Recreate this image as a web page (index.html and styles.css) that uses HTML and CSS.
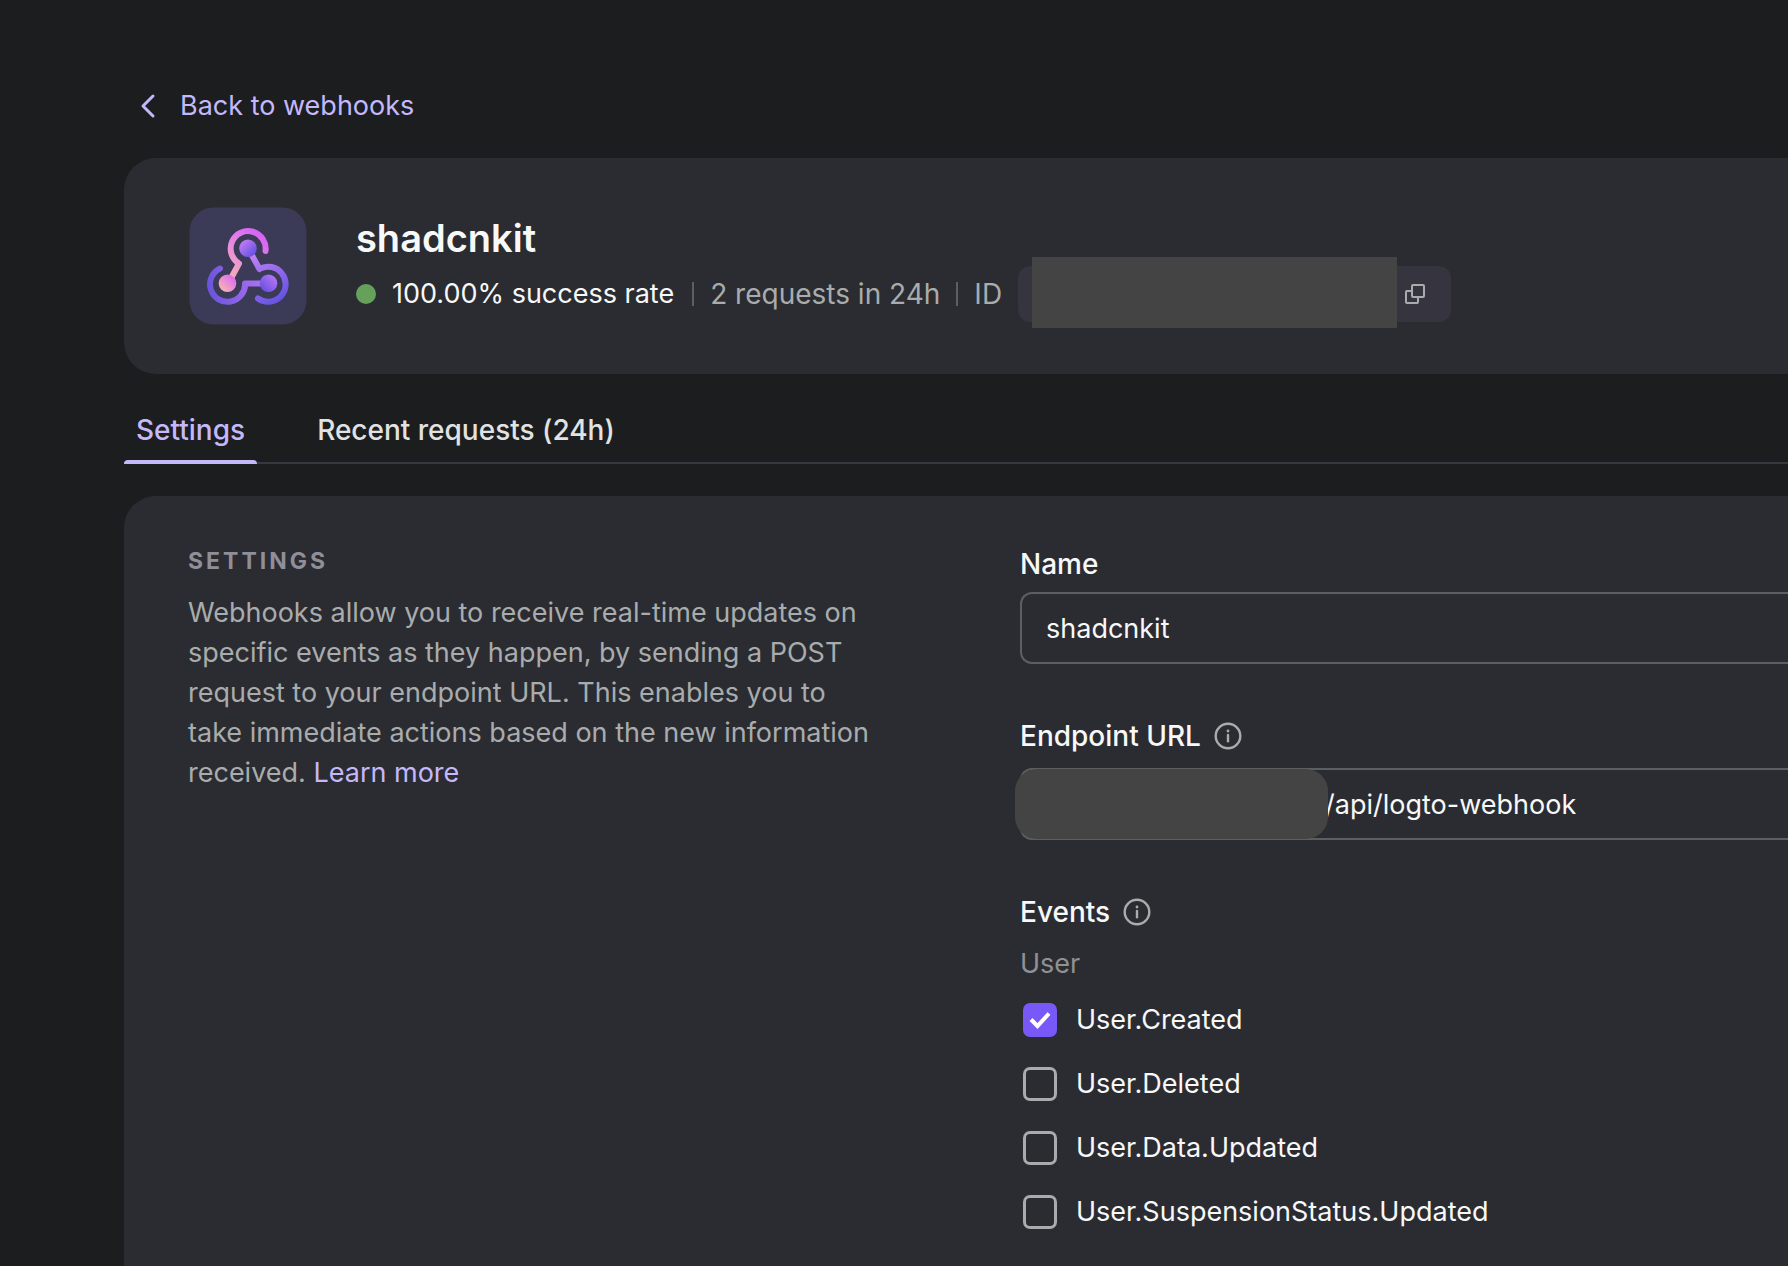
FILE: index.html
```html
<!DOCTYPE html>
<html lang="en">
<head>
<meta charset="utf-8">
<title>shadcnkit - Webhook details</title>
<link rel="stylesheet" href="styles.css">
</head>
<body>
<main class="page">
  <a class="back" href="#">
    <svg class="back-icon" viewBox="0 0 40 40" fill="none" stroke="currentColor" stroke-width="3" stroke-linecap="round" stroke-linejoin="round" aria-hidden="true"><path d="M29 10L19 20L29 30"/></svg>
    Back to webhooks
  </a>

  <header class="card summary">
    <svg class="logo" viewBox="0 0 120 120" fill="none" aria-hidden="true">
      <defs>
        <linearGradient id="g1" gradientUnits="userSpaceOnUse" x1="80" y1="30" x2="42" y2="72"><stop offset="0" stop-color="#d35ff5"/><stop offset=".4" stop-color="#e47eea"/><stop offset="1" stop-color="#f5b0b4"/></linearGradient>
        <linearGradient id="g2" gradientUnits="userSpaceOnUse" x1="62" y1="45" x2="96" y2="98"><stop offset="0" stop-color="#c884f6"/><stop offset="1" stop-color="#5c4fe0"/></linearGradient>
        <linearGradient id="g3" gradientUnits="userSpaceOnUse" x1="82" y1="70" x2="20" y2="82"><stop offset="0" stop-color="#b876f5"/><stop offset="1" stop-color="#6a54dc"/></linearGradient>
        <linearGradient id="d1" x1="0" y1="0" x2="1" y2="1"><stop offset=".1" stop-color="#c67df4"/><stop offset=".9" stop-color="#5e4fe2"/></linearGradient>
        <linearGradient id="d2" x1="1" y1="0" x2="0" y2="1"><stop offset=".2" stop-color="#e070ee"/><stop offset=".9" stop-color="#f8b8ae"/></linearGradient>
        <linearGradient id="d3" x1="1" y1="0" x2="0" y2="1"><stop offset=".1" stop-color="#b876f5"/><stop offset=".9" stop-color="#6650e0"/></linearGradient>
      </defs>
      <rect x="1.500" y="1.500" width="117" height="117" rx="24" fill="#3b3a57"/>
      <g stroke-width="6" stroke-linecap="round" stroke-linejoin="round">
        <path stroke="url(#g1)" d="M77.500 45A17.500 17.500 0 1 0 51 57.500L41 76"/>
        <path stroke="url(#g2)" d="M61 44L71.500 63A17.500 17.500 0 1 1 70 92.500"/>
        <path stroke="url(#g3)" d="M80 77.500H57A17.500 17.500 0 1 1 32 62.500"/>
      </g>
      <circle cx="60" cy="42.300" r="8.800" fill="url(#d1)"/>
      <circle cx="39.500" cy="77.300" r="8.800" fill="url(#d2)"/>
      <circle cx="80.500" cy="77.300" r="8.800" fill="url(#d3)"/>
    </svg>
    <div class="summary-text">
      <h1 class="title">shadcnkit</h1>
      <div class="meta">
        <span class="status"><span class="dot"></span>100.00% success rate</span>
        <span class="divider"></span>
        <span class="stat">2 requests in 24h</span>
        <span class="divider"></span>
        <span class="stat">ID</span>
        <div class="id-pill">
          <span class="id-mask"></span>
          <button class="copy" type="button" aria-label="Copy">
            <svg viewBox="0 0 20 20" fill="none" stroke="currentColor" stroke-width="2" stroke-linejoin="round"><rect x="7" y="1" width="12" height="12" rx="1"/><path d="M7 7H2a1 1 0 0 0-1 1V18a1 1 0 0 0 1 1H12a1 1 0 0 0 1-1V13"/></svg>
          </button>
        </div>
      </div>
    </div>
  </header>

  <nav class="tabs">
    <a class="tab tab-active" href="#">Settings</a>
    <a class="tab" href="#">Recent requests (24h)</a>
  </nav>

  <section class="card settings">
    <div class="intro">
      <h2 class="section-title">SETTINGS</h2>
      <p class="description">Webhooks allow you to receive real-time updates on specific events as they happen, by sending a POST request to your endpoint URL. This enables you to take immediate actions based on the new information received. <a class="link" href="#">Learn more</a></p>
    </div>
    <form class="form">
      <div class="field field-tight">
        <label class="label" for="name">Name</label>
        <input class="input" id="name" type="text" value="shadcnkit">
      </div>
      <div class="field">
        <div class="label-row">
          <label class="label" for="url">Endpoint URL</label>
          <svg class="info" viewBox="0 0 28 28" fill="none" stroke="currentColor" aria-hidden="true"><circle cx="14" cy="14" r="12.300" stroke-width="2.400"/><path d="M14 13V19.200" stroke-width="2.400" stroke-linecap="round"/><circle cx="14" cy="9" r="1.400" fill="currentColor" stroke="none"/></svg>
        </div>
        <div class="url-box">
          <input class="input input-url" id="url" type="text" value="/api/logto-webhook">
          <span class="url-mask"></span>
        </div>
      </div>
      <fieldset class="field events">
        <legend class="label-row">
          <span class="label">Events</span>
          <svg class="info" viewBox="0 0 28 28" fill="none" stroke="currentColor" aria-hidden="true"><circle cx="14" cy="14" r="12.300" stroke-width="2.400"/><path d="M14 13V19.200" stroke-width="2.400" stroke-linecap="round"/><circle cx="14" cy="9" r="1.400" fill="currentColor" stroke="none"/></svg>
        </legend>
        <div class="group">User</div>
        <div class="options">
          <label class="option"><span class="tick"><input class="check" type="checkbox" checked><svg class="mark" viewBox="0 0 34 34" fill="none" stroke="#fff" stroke-width="4" aria-hidden="true"><path d="M8 16.500L14.500 23L26 10.500"/></svg></span>User.Created</label>
          <label class="option"><span class="tick"><input class="check" type="checkbox"></span>User.Deleted</label>
          <label class="option"><span class="tick"><input class="check" type="checkbox"></span>User.Data.Updated</label>
          <label class="option"><span class="tick"><input class="check" type="checkbox"></span>User.SuspensionStatus.Updated</label>
        </div>
      </fieldset>
    </form>
  </section>
</main>
</body>
</html>
```
FILE: styles.css
```css
* { box-sizing: border-box; }

body {
  margin: 0;
  background: #1b1d1e;
  color: #f7f8f8;
  font: 400 27px/40px Inter, "Liberation Sans", sans-serif;
}

a { text-decoration: none; }

h1, h2, p { margin: 0; }

.page {
  display: flex;
  flex-direction: column;
  min-height: 100vh;
  padding: 86px 0 0 124px;
}

.back {
  display: flex;
  align-self: flex-start;
  gap: 16px;
  color: #c4b8fb;
}

.back-icon {
  width: 40px;
  height: 40px;
}

.card {
  background: #2b2c32;
  border-radius: 32px 0 0 32px;
}

.summary {
  display: flex;
  align-items: center;
  gap: 48px;
  margin-top: 32px;
  padding: 48px 0 48px 64px;
}

.logo {
  flex: none;
  width: 120px;
  height: 120px;
}

.summary-text {
  display: flex;
  flex-direction: column;
}

.title {
  font-size: 38px;
  font-weight: 600;
  line-height: 56px;
}

.meta {
  display: flex;
  align-items: center;
  gap: 16px;
  color: #a9acac;
  white-space: nowrap;
}

.status {
  display: flex;
  align-items: center;
  gap: 16px;
  padding-right: 2px;
  color: #f7f8f8;
}

.stat { font-size: 28px; }

.dot {
  width: 20px;
  height: 20px;
  border-radius: 50%;
  background: #66a15c;
}

.divider {
  width: 2px;
  height: 24px;
  background: #5c5f60;
}

.id-pill {
  position: relative;
  display: flex;
  align-items: center;
  justify-content: flex-end;
  width: 433px;
  height: 56px;
  padding-right: 26px;
  border-radius: 12px;
  background: #35343f;
}

.id-mask {
  position: absolute;
  top: -9px;
  left: 14px;
  width: 365px;
  height: 71px;
  background: #444;
}

.copy {
  display: flex;
  width: 20px;
  height: 20px;
  padding: 0;
  border: 0;
  background: none;
  color: #a9acac;
}

.tabs {
  display: flex;
  gap: 48px;
  margin-top: 36px;
  border-bottom: 2px solid #37383f;
}

.tab {
  margin-bottom: -2px;
  padding: 0 12px 10px;
  border-bottom: 4px solid transparent;
  color: #e1e3e3;
  font-size: 28px;
  font-weight: 500;
}

.tab-active {
  position: relative;
  color: #c4b8fb;
}

.tab-active::after {
  content: "";
  position: absolute;
  right: 0;
  bottom: -4px;
  left: 0;
  height: 4px;
  border-radius: 4px 4px 0 0;
  background: #c4b8fb;
}

.settings {
  display: grid;
  flex: 1;
  grid-template-columns: 696px minmax(0, 1fr);
  gap: 136px;
  margin-top: 32px;
  padding: 48px 0 0 64px;
  border-radius: 32px 0 0 0;
}

.intro {
  display: flex;
  flex-direction: column;
  gap: 15px;
}

.section-title {
  color: #8f8e99;
  font-size: 23px;
  font-weight: 700;
  letter-spacing: 3px;
  line-height: 34px;
}

.description { color: #a9acac; }

.link { color: #c4b8fb; }

.form {
  display: flex;
  flex-direction: column;
  gap: 52px;
  padding-bottom: 34px;
}

.field {
  display: flex;
  flex-direction: column;
  gap: 12px;
}

.field-tight { gap: 8px; }

.label {
  font-size: 28px;
  font-weight: 500;
}

.label-row {
  display: flex;
  align-items: center;
  gap: 13px;
  padding: 0;
}

.info {
  width: 28px;
  height: 28px;
  color: #a9acac;
}

.input {
  display: block;
  width: 100%;
  height: 72px;
  padding: 0 0 0 24px;
  border: 2px solid #5c5f60;
  border-right: 0;
  border-radius: 12px 0 0 12px;
  outline: 0;
  background: none;
  color: #f7f8f8;
  font: inherit;
}

.url-box { position: relative; }

.input-url { padding-left: 303px; }

.url-mask {
  position: absolute;
  top: 1px;
  left: -5px;
  width: 313px;
  height: 70px;
  border-radius: 22px;
  background: #444;
}

.events {
  margin: 0;
  padding: 0;
  border: 0;
}

.group {
  margin-top: 12px;
  color: #8f9192;
}

.options {
  display: flex;
  flex-direction: column;
  gap: 24px;
  margin-top: 4px;
}

.option {
  display: flex;
  align-items: center;
  gap: 19px;
  padding-left: 3px;
}

.tick {
  display: grid;
}

.check,
.mark {
  grid-area: 1 / 1;
  width: 34px;
  height: 34px;
  margin: 0;
}

.check {
  appearance: none;
  border: 3px solid #a9acac;
  border-radius: 7px;
}

.check:checked {
  border: 0;
  background: #7958f8;
}

.mark { pointer-events: none; }
```
